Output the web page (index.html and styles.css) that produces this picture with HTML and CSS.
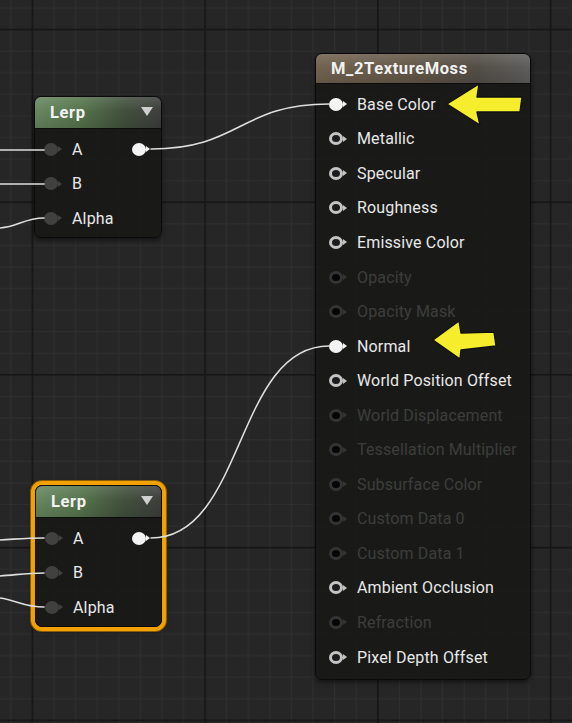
FILE: index.html
```html
<!DOCTYPE html>
<html>
<head>
<meta charset="utf-8">
<link rel="stylesheet" href="styles.css">
</head>
<body>
<div class="graph">
  <svg class="grid" width="572" height="723" viewBox="0 0 572 723">
    <defs>
      <pattern id="cells" patternUnits="userSpaceOnUse" x="21.6" y="18.7" width="172.72" height="172.72">
        <g stroke="#2f2f2f" stroke-width="1">
          <line x1="32.39" y1="0" x2="32.39" y2="172.72"/>
          <line x1="53.98" y1="0" x2="53.98" y2="172.72"/>
          <line x1="75.57" y1="0" x2="75.57" y2="172.72"/>
          <line x1="97.16" y1="0" x2="97.16" y2="172.72"/>
          <line x1="118.75" y1="0" x2="118.75" y2="172.72"/>
          <line x1="140.34" y1="0" x2="140.34" y2="172.72"/>
          <line x1="161.93" y1="0" x2="161.93" y2="172.72"/>
          <line y1="32.39" x1="0" y2="32.39" x2="172.72"/>
          <line y1="53.98" x1="0" y2="53.98" x2="172.72"/>
          <line y1="75.57" x1="0" y2="75.57" x2="172.72"/>
          <line y1="97.16" x1="0" y2="97.16" x2="172.72"/>
          <line y1="118.75" x1="0" y2="118.75" x2="172.72"/>
          <line y1="140.34" x1="0" y2="140.34" x2="172.72"/>
          <line y1="161.93" x1="0" y2="161.93" x2="172.72"/>
        </g>
        <g stroke="#141414" stroke-width="1.6">
          <line x1="10.8" y1="0" x2="10.8" y2="172.72"/>
          <line y1="10.8" x1="0" y2="10.8" x2="172.72"/>
        </g>
      </pattern>
    </defs>
    <rect width="572" height="723" fill="#262626"/>
    <rect width="572" height="723" fill="url(#cells)"/>
  </svg>

  <div class="node lerp lerp-1">
    <div class="head head-green"><span class="title">Lerp</span><span class="caret"></span></div>
    <div class="body">
      <div class="row"><span class="pin pin-dark"></span><span class="label">A</span><span class="pin pin-out"></span></div>
      <div class="row"><span class="pin pin-dark"></span><span class="label">B</span></div>
      <div class="row"><span class="pin pin-dark"></span><span class="label">Alpha</span></div>
    </div>
  </div>

  <div class="node lerp lerp-2">
    <div class="head head-green"><span class="title">Lerp</span><span class="caret"></span></div>
    <div class="body">
      <div class="row"><span class="pin pin-dark"></span><span class="label">A</span><span class="pin pin-out"></span></div>
      <div class="row"><span class="pin pin-dark"></span><span class="label">B</span></div>
      <div class="row"><span class="pin pin-dark"></span><span class="label">Alpha</span></div>
    </div>
  </div>

  <div class="node material">
    <div class="head head-brown"><span class="title">M_2TextureMoss</span></div>
    <div class="body">
      <div class="row"><span class="pin pin-linked"></span><span class="label">Base Color</span></div>
      <div class="row"><span class="pin pin-ring"></span><span class="label">Metallic</span></div>
      <div class="row"><span class="pin pin-ring"></span><span class="label">Specular</span></div>
      <div class="row"><span class="pin pin-ring"></span><span class="label">Roughness</span></div>
      <div class="row"><span class="pin pin-ring"></span><span class="label">Emissive Color</span></div>
      <div class="row off"><span class="pin pin-off"></span><span class="label">Opacity</span></div>
      <div class="row off"><span class="pin pin-off"></span><span class="label">Opacity Mask</span></div>
      <div class="row"><span class="pin pin-linked"></span><span class="label">Normal</span></div>
      <div class="row"><span class="pin pin-ring"></span><span class="label">World Position Offset</span></div>
      <div class="row off"><span class="pin pin-off"></span><span class="label">World Displacement</span></div>
      <div class="row off"><span class="pin pin-off"></span><span class="label">Tessellation Multiplier</span></div>
      <div class="row off"><span class="pin pin-off"></span><span class="label">Subsurface Color</span></div>
      <div class="row off"><span class="pin pin-off"></span><span class="label">Custom Data 0</span></div>
      <div class="row off"><span class="pin pin-off"></span><span class="label">Custom Data 1</span></div>
      <div class="row"><span class="pin pin-ring"></span><span class="label">Ambient Occlusion</span></div>
      <div class="row off"><span class="pin pin-off"></span><span class="label">Refraction</span></div>
      <div class="row"><span class="pin pin-ring"></span><span class="label">Pixel Depth Offset</span></div>
    </div>
  </div>

  <svg class="wires" width="572" height="723" viewBox="0 0 572 723">
    <g fill="none" stroke="#dedede" stroke-width="1.6" stroke-linecap="round">
      <path d="M151 149 C 240 149, 240 104, 329 104"/>
      <path d="M151 538 C 245 538, 235 346, 329 346"/>
      <path d="M0 150 L44 150"/>
      <path d="M0 184 L44 184"/>
      <path d="M0 228 C 18 227, 24 218, 44 218"/>
      <path d="M0 540 C 18 539, 26 538, 44 538"/>
      <path d="M0 576 C 16 575, 26 573, 44 573"/>
      <path d="M0 598 C 16 600, 24 607, 44 607"/>
    </g>
    <g fill="#f6ee2c" stroke="#111" stroke-width="1.4" stroke-linejoin="round">
      <polygon points="447,104 479,84 477,97 522,97 520,112 477,112 480,125"/>
      <polygon points="433,340 459,321 461,333 494,332 496,346 461,350 460,359"/>
    </g>
  </svg>
</div>
</body>
</html>
```

FILE: styles.css
```css
* { box-sizing: border-box; margin: 0; padding: 0; }
html, body { width: 572px; height: 723px; overflow: hidden; background: #262626; }
body { font-family: Roboto, "Liberation Sans", sans-serif; color: #e6e6e6; }

.graph { position: relative; width: 572px; height: 723px; overflow: hidden; }
.grid { position: absolute; left: 0; top: 0; z-index: 0; }
.wires { position: absolute; left: 0; top: 0; z-index: 3; pointer-events: none; }

.node {
  position: absolute;
  z-index: 1;
  display: flex;
  flex-direction: column;
  background: rgba(25, 26, 24, 0.93);
  border: 1px solid #0a0a0a;
  border-radius: 7px;
  box-shadow: 0 2px 5px rgba(0, 0, 0, 0.55);
}
.lerp-1 { left: 34px; top: 96px; width: 128px; height: 142px; }
.lerp-2 {
  left: 35px; top: 485px; width: 127px; height: 142px;
  box-shadow: 0 0 0 4px #f2a200, 0 0 0 5px #8c5a00, 0 3px 8px rgba(0,0,0,.6);
}
.material { left: 315px; top: 53px; width: 216px; height: 627px; }

.head {
  display: flex;
  align-items: center;
  justify-content: space-between;
  padding: 0 8px 0 15px;
  border-radius: 6px 6px 0 0;
  border-bottom: 1px solid #0c0c0c;
  flex: none;
}
.lerp .head { height: 32px; }
.material .head { height: 30px; }
.head-green {
  background:
    linear-gradient(to bottom, rgba(255,255,255,0.12), rgba(255,255,255,0) 45%, rgba(0,0,0,0.12)),
    linear-gradient(to right, #678760 0%, #56754d 35%, #42513d 70%, #3d3e3c 100%);
}
.head-brown {
  background:
    linear-gradient(to bottom, rgba(255,255,255,0.12), rgba(255,255,255,0) 45%, rgba(0,0,0,0.12)),
    linear-gradient(to right, #726350 0%, #655948 40%, #544e47 75%, #5e5e5c 100%);
}
.title { font-weight: 700; font-size: 16.5px; color: #f2f2f2; letter-spacing: 0.6px; }
.caret {
  width: 0; height: 0;
  border-left: 6.5px solid transparent;
  border-right: 6.5px solid transparent;
  border-top: 9px solid #cfcfcf;
  margin-top: -3px;
}

.body { flex: 1; padding-top: 3px; display: flex; flex-direction: column; }
.row { height: 34.55px; display: flex; align-items: center; flex: none; }
.lerp .row { padding-left: 9px; }
.material .row { padding-left: 13px; }
.label { margin-left: 14px; font-size: 16px; letter-spacing: 0.15px; color: #e8e8e8; white-space: nowrap; }
.row.off .label { color: #3d3e3c; }

.pin { position: relative; width: 14px; height: 13px; border-radius: 50%; flex: none; }
.pin::after {
  content: "";
  position: absolute;
  left: 100%;
  top: 50%;
  margin-top: -3px;
  border-top: 3px solid transparent;
  border-bottom: 3px solid transparent;
  border-left: 4px solid currentColor;
}
.pin-dark { background: #414140; color: #414140; }
.pin-out { background: #f4f4f4; color: #f4f4f4; margin-left: auto; margin-right: 15px; }
.pin-linked { background: #f4f4f4; color: #f4f4f4; }
.pin-ring { border: 3px solid #c4c4c4; background: #1c1c1c; color: #c4c4c4; }
.pin-ring::after { left: calc(100% + 3px); margin-top: -3px; }
.pin-off { border: 3px solid #343434; background: #060606; color: #343434; }
.pin-off::after { left: calc(100% + 3px); }
```
